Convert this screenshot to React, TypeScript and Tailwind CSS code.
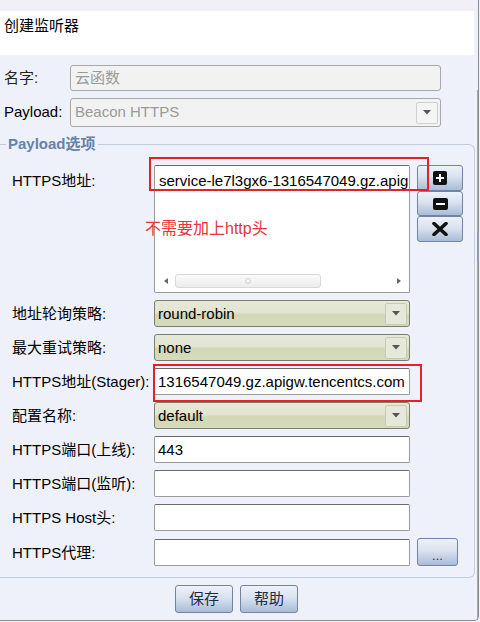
import React from "react";

const font = "font-['Liberation_Sans','Noto_Sans_CJK_SC',sans-serif]";

function Arrow() {
  return (
    <svg width="8" height="5" viewBox="0 0 8 5">
      <path d="M0 0h8L4 4.5z" fill="#555" />
    </svg>
  );
}

function Select({ value }: { value: string }) {
  return (
    <div className="relative flex h-[27px] w-[256px] shrink-0 items-center rounded-[3px] border border-[#7c7e6c] bg-[linear-gradient(#e6e8d8_0%,#e2e5d1_45%,#d2d7b6_55%,#d6dbbc_100%)] pl-[3px]">
      <span className="flex-1 text-[15px] leading-none text-black">{value}</span>
      <div className="mr-[2px] flex h-[22px] w-[22px] items-center justify-center rounded-[2px] border border-[#c8cab8] bg-[#e6e8da]">
        <Arrow />
      </div>
    </div>
  );
}

function TextInput({ value }: { value?: string }) {
  return (
    <div className="flex h-[27px] w-[256px] shrink-0 items-center overflow-hidden rounded-[2px] border border-[#9a9a9a] border-t-[#6a6a6a] bg-white pl-[3px] text-[15px] leading-none whitespace-nowrap text-black">
      {value}
    </div>
  );
}

function Row({ label, children }: { label: string; children: React.ReactNode }) {
  return (
    <div className="flex items-center">
      <div className="w-[154px] shrink-0 pl-[12px] text-[15px] leading-none whitespace-nowrap text-black">{label}</div>
      {children}
    </div>
  );
}

const btn =
  "flex shrink-0 items-center justify-center rounded-[3px] border border-[#6f84a6] bg-[linear-gradient(#eef2f9_0%,#d9e2ef_45%,#a9bcd6_100%)]";

export default function App() {
  return (
    <div className={`relative h-[622px] w-[480px] overflow-hidden bg-[#eef1f9] ${font}`}>
      <div className="flex h-[621px] w-[479px] rounded-br-[5px] border-r border-b border-[#8c8c8c]">
        <div className="flex w-[476px] shrink-0 flex-col">
          <div className="h-[11px] bg-[#f1f0f6]" />
          <div className="mr-[2px] h-[44px] bg-white pt-[5px] pl-[4px] text-[15px] leading-[20px] text-black">
            创建监听器
          </div>

          <div className="mt-[10px] flex items-center">
            <div className="w-[70px] shrink-0 pl-[4px] text-[15px] text-[#222]">名字:</div>
            <div className="flex h-[26px] w-[371px] items-center rounded-[3px] border border-[#a8a8a8] bg-[#f2f2f2] pl-[4px] text-[15px] text-[#9a9a9a]">
              云函数
            </div>
          </div>

          <div className="mt-[7px] flex items-center">
            <div className="w-[70px] shrink-0 pl-[4px] text-[15px] text-black">Payload:</div>
            <div className="flex h-[29px] w-[371px] items-center rounded-[3px] border border-[#a8a8a8] bg-[#f2f2f2] pl-[4px]">
              <span className="flex-1 text-[15px] text-[#9a9a9a]">Beacon HTTPS</span>
              <div className="mr-[2px] flex h-[22px] w-[22px] items-center justify-center rounded-[2px] border border-[#cfcfcf] bg-[#f4f4f4]">
                <Arrow />
              </div>
            </div>
          </div>

          <fieldset className="mt-[7px] mr-[1px] rounded-r-[6px] border border-l-0 border-[#c3cde0] pb-[11px]">
            <legend className="ml-[6px] px-[2px] text-[15px] leading-[20px] font-bold text-[#6582a8]">
              Payload选项
            </legend>

            <div className="mt-[11px] flex flex-col gap-[7px]">
              <div className="flex items-start">
                <div className="w-[154px] shrink-0 pt-[8px] pl-[12px] text-[15px] leading-none text-black">
                  HTTPS地址:
                </div>
                <div className="flex h-[128px] w-[256px] shrink-0 flex-col rounded-[2px] border border-[#9a9a9a] border-t-[#6a6a6a] bg-white">
                  <div className="flex-1 pt-[7px] pl-[4px] text-[15px] leading-none whitespace-nowrap text-black">
                    service-le7l3gx6-1316547049.gz.apig
                  </div>
                  <div className="mx-[2px] mb-[4px] flex h-[15px] items-center">
                    <div className="flex h-[15px] w-[18px] items-center justify-center">
                      <svg width="4" height="6" viewBox="0 0 4 6">
                        <path d="M4 0v6L0 3z" fill="#666" />
                      </svg>
                    </div>
                    <div className="flex h-[14px] w-[146px] items-center justify-center rounded-[3px] border border-[#d8d8d8] bg-[linear-gradient(#fafafa,#ececec)]">
                      <div className="h-[6px] w-[6px] rounded-full border border-[#cfcfcf]" />
                    </div>
                    <div className="flex-1" />
                    <div className="flex h-[15px] w-[16px] items-center justify-center">
                      <svg width="4" height="6" viewBox="0 0 4 6">
                        <path d="M0 0v6L4 3z" fill="#666" />
                      </svg>
                    </div>
                  </div>
                </div>
                <div className="ml-[7px] flex w-[46px] shrink-0 flex-col">
                  <div className={`${btn} h-[26px]`}>
                    <div className="flex h-[14px] w-[14px] items-center justify-center rounded-[2px] bg-[#111]">
                      <svg width="10" height="10" viewBox="0 0 10 10">
                        <path d="M4 1h2v3h3v2H6v3H4V6H1V4h3z" fill="#fff" />
                      </svg>
                    </div>
                  </div>
                  <div className={`${btn} h-[25px]`}>
                    <div className="flex h-[12px] w-[15px] items-center justify-center rounded-[2px] bg-[#111]">
                      <div className="h-[2px] w-[9px] bg-white" />
                    </div>
                  </div>
                  <div className={`${btn} h-[26px]`}>
                    <svg width="16" height="14" viewBox="0 0 16 14">
                      <path d="M2 1.5L14 12.5M14 1.5L2 12.5" stroke="#111" strokeWidth="3.6" strokeLinecap="round" />
                    </svg>
                  </div>
                </div>
              </div>

              <Row label="地址轮询策略:">
                <Select value="round-robin" />
              </Row>
              <Row label="最大重试策略:">
                <Select value="none" />
              </Row>
              <Row label="HTTPS地址(Stager):">
                <TextInput value="1316547049.gz.apigw.tencentcs.com" />
              </Row>
              <Row label="配置名称:">
                <Select value="default" />
              </Row>
              <Row label="HTTPS端口(上线):">
                <TextInput value="443" />
              </Row>
              <Row label="HTTPS端口(监听):">
                <TextInput />
              </Row>
              <Row label="HTTPS Host头:">
                <TextInput />
              </Row>
              <Row label="HTTPS代理:">
                <TextInput />
                <div className={`${btn} ml-[7px] h-[28px] w-[41px] pt-[6px] text-[13px] leading-none text-[#333]`}>
                  ...
                </div>
              </Row>
            </div>
          </fieldset>

          <div className="mt-[7px] flex justify-center gap-[7px] pr-[3px]">
            <button className={`${btn} h-[28px] w-[58px] border-[#4e5d78] text-[15px] text-[#1c2c48]`}>保存</button>
            <button className={`${btn} h-[28px] w-[58px] border-[#4e5d78] text-[15px] text-[#1c2c48]`}>帮助</button>
          </div>
        </div>

        <div className="relative flex-1">
          <div className="absolute top-[90px] bottom-0 left-[1px] w-px bg-[#a8a8a8]" />
          <div className="absolute top-[232px] left-[1px] h-[30px] w-[2px] bg-[#8f9aaa]" />
        </div>
      </div>

      {/* red annotation overlays */}
      <div className="pointer-events-none absolute top-[157px] left-[149px] h-[34px] w-[280px] border-2 border-[#e3212b]" />
      <div className="pointer-events-none absolute top-[364px] left-[153px] h-[38px] w-[269px] border-2 border-[#e3212b]" />
      <div className="pointer-events-none absolute top-[219px] left-[145px] text-[16px] leading-[20px] text-[#e8333c]">
        不需要加上http头
      </div>
    </div>
  );
}
